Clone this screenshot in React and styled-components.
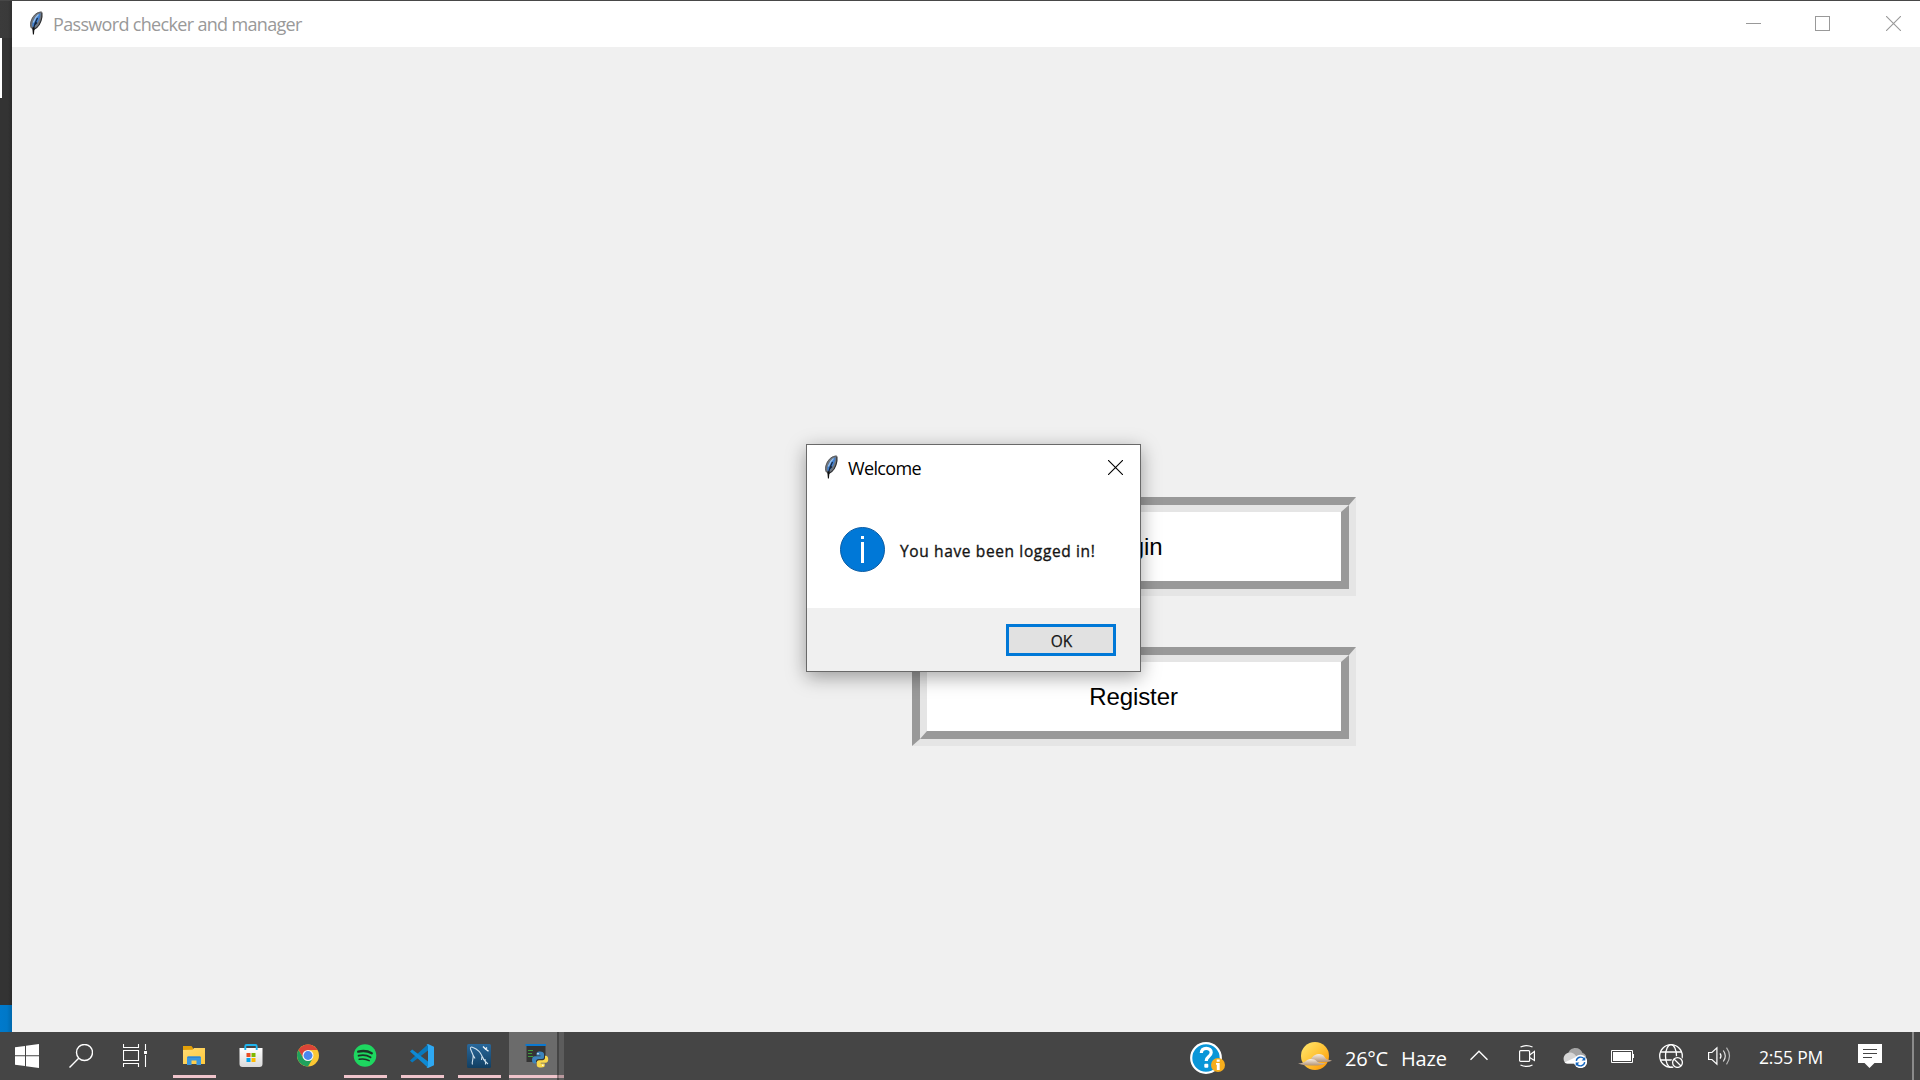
import React from 'react';
import styled, { createGlobalStyle } from 'styled-components';

const GlobalStyle = createGlobalStyle`
  * { box-sizing: border-box; }
  html, body { margin: 0; padding: 0; background: #444; overflow: hidden; }
  svg { display: block; flex: none; }
`;

const ui = `'Open Sans', 'Noto Sans', sans-serif`;

const Desktop = styled.div`
  width: 1920px;
  height: 1080px;
  display: flex;
  flex-direction: column;
  background: #444;
  font-family: ${ui};
`;

const Workspace = styled.div`
  height: 1032px;
  display: flex;
  padding-top: 1px;
  background: #474747;
`;

const Behind = styled.div`
  width: 12px;
  display: flex;
  flex-direction: column;
  background: linear-gradient(90deg, #333 0, #333 8px, #2a2a2a 12px);
`;

const BehindTop = styled.div`
  height: 37px;
  background: linear-gradient(90deg, #3b3b3b 0, #3a3a3a 8px, #303030 12px);
`;

const BehindMark = styled.div`
  width: 2px;
  height: 60px;
  background: #fff;
`;

const BehindStatus = styled.div`
  height: 27px;
  margin-top: auto;
  background: linear-gradient(90deg, #007acc 0, #0078c8 7px, #0068ac 12px);
`;

const Window = styled.main`
  flex: 1;
  display: flex;
  flex-direction: column;
  background: #f0f0f0;
`;

const TitleBar = styled.header`
  height: ${(p) => p.$height}px;
  display: flex;
  align-items: flex-start;
  background: #fff;
  padding-left: 17px;
`;

const FeatherBox = styled.div`
  padding-top: 10px;
`;

const Title = styled.div`
  flex: 1;
  margin-left: ${(p) => p.$left}px;
  padding-top: ${(p) => p.$top}px;
  font-size: 18px;
  line-height: 24px;
  font-weight: ${(p) => p.$weight};
  letter-spacing: ${(p) => p.$spacing}px;
  color: ${(p) => p.$color};
  white-space: nowrap;
`;

const Caption = styled.div`
  width: ${(p) => p.$width}px;
  padding-top: 15px;
  display: flex;
  justify-content: center;
`;

const ButtonColumn = styled.div`
  flex: 1;
  display: flex;
  flex-direction: column;
  gap: 51px;
  padding: 450px 0 0 900px;
`;

const Groove = styled.div`
  width: 444px;
  height: 99px;
  display: flex;
  border-style: solid;
  border-width: 8px 7px 7px 8px;
  border-color: #999 #e5e5e5 #e5e5e5 #999;
`;

const GrooveButton = styled.button`
  flex: 1;
  padding: 1px 1px 0 0;
  border-style: solid;
  border-width: 7px 8px 8px 7px;
  border-color: #e5e5e5 #999 #999 #e5e5e5;
  background: #fff;
  color: #000;
  font: 24px/28px 'Liberation Sans', Arial, sans-serif;
  letter-spacing: -0.1px;
`;

const Dialog = styled.div`
  position: absolute;
  left: 806px;
  top: 444px;
  width: 335px;
  height: 228px;
  display: flex;
  flex-direction: column;
  border: 1px solid #696969;
  background: #fff;
  box-shadow: 0 5px 18px rgba(0, 0, 0, 0.36);
`;

const DialogBody = styled.div`
  flex: 1;
  display: flex;
  align-items: flex-start;
  padding: 35px 0 0 33px;
`;

const Message = styled.div`
  margin: 13px 0 0 15px;
  font-size: 15.5px;
  line-height: 22px;
  letter-spacing: 0.63px;
  -webkit-text-stroke: 0.35px #151515;
  color: #151515;
  white-space: nowrap;
`;

const DialogFooter = styled.div`
  height: 63px;
  display: flex;
  justify-content: flex-end;
  padding: 16px 24px 0 0;
  background: #f0f0f0;
`;

const OkButton = styled.button`
  width: 110px;
  height: 32px;
  padding: 1px 0 0 1px;
  border: 3px solid #0078d7;
  background: #e1e1e1;
  color: #151515;
  font: 15.5px/24px ${ui};
  -webkit-text-stroke: 0.25px #151515;
`;

const Taskbar = styled.footer`
  height: 48px;
  display: flex;
  align-items: stretch;
  background: #454545;
`;

const Slot = styled.div`
  width: ${(p) => p.$width}px;
  display: flex;
  align-items: center;
  justify-content: center;
  padding-top: ${(p) => p.$drop || 0}px;
`;

const Spacer = styled.div`
  width: ${(p) => p.$width}px;
`;

const TaskApp = styled.div`
  width: 57px;
  display: flex;
  flex-direction: column;
  align-items: flex-start;
  padding: 12px 0 0 7px;

  svg { margin-left: 9px; }
`;

const Underline = styled.div`
  width: ${(p) => p.$width || 43}px;
  height: 3px;
  margin-top: 7px;
  background: #efc4cb;
`;

const ActiveApp = styled.div`
  width: 48px;
  display: flex;
  flex-direction: column;
  align-items: flex-start;
  padding-top: 12px;
  background: #6b6b6b;

  svg { margin-left: 16px; }
`;

const StackEdge = styled.div`
  width: 7px;
  display: flex;
  align-items: flex-end;
  padding-bottom: 2px;
  background: linear-gradient(90deg, #454545 2px, #5c5c5c 2px);
`;

const StackLine = styled.div`
  width: 7px;
  height: 3px;
  background: linear-gradient(90deg, #92797d 2px, #b9999e 2px);
`;

const Weather = styled.div`
  width: 165px;
  display: flex;
  align-items: flex-start;
  padding: 8px 0 0 8px;
  color: #fff;
  font-size: 20px;
  line-height: 26px;
  white-space: nowrap;
`;

const Temp = styled.span`
  width: 56px;
  margin: 6px 0 0 12px;
  letter-spacing: -0.3px;
`;

const Condition = styled.span`
  margin-top: 6px;
  letter-spacing: -0.2px;
`;

const Clock = styled.div`
  width: 96px;
  padding-top: 13px;
  text-align: center;
  color: #fff;
  font-size: 17.5px;
  line-height: 24px;
  letter-spacing: -0.2px;
  white-space: nowrap;
`;

const ShowDesktop = styled.div`
  width: 8px;
  margin-left: auto;
  border-left: 2px solid #8a8a8a;
`;

const Feather = () => (
  <svg width="14" height="24" viewBox="0 0 14 24">
    <path d="M12.800.8C8.500.8 4.600 3.500 2.500 8.500 1 12 .8 15.600 2.800 18L4.300 19C8.500 17 12 12.500 13 6z" fill="#74787e" />
    <path d="M12.900 1.500V6C12 12 8.500 16.800 4.800 18.500" fill="none" stroke="#2b2d30" strokeWidth="1.200" />
    <path d="M12.500.900C8.500 1.200 4.800 3.700 2.700 8.500 1.400 11.700 1.200 15 2.300 17" fill="none" stroke="#55585c" strokeWidth="1" />
    <path d="M11.500 2.300C8 3.500 5 7 3.600 11.500 2.900 14 3.200 15.500 4.200 16.800 8 13.500 11.300 8 11.500 2.300z" fill="#4180cf" />
    <path d="M9.500 3.500C7 5.500 5.500 8 4.300 11.500" stroke="#9ec4ec" strokeWidth="1.200" fill="none" />
    <path d="M8.500 7C6.800 10 5.300 14 4.400 18M8 11.500l-2 2" stroke="#14243c" strokeWidth="1.200" fill="none" />
    <path d="M3.300 16.500h2.300l-.7 7h-1z" fill="#111" />
  </svg>
);

const Minimize = () => (
  <svg width="15" height="15" viewBox="0 0 15 15"><path d="M0 7.500h15" stroke="#999" /></svg>
);
const Maximize = () => (
  <svg width="15" height="15" viewBox="0 0 15 15"><rect x=".5" y=".5" width="14" height="14" fill="none" stroke="#999" /></svg>
);
const Close = ({ color }) => (
  <svg width="15" height="15" viewBox="0 0 15 15"><path d="M0 0l15 15M15 0L0 15" stroke={color} strokeWidth="1.100" /></svg>
);

const InfoIcon = () => (
  <svg width="45" height="45" viewBox="0 0 45 45">
    <circle cx="22.500" cy="22.500" r="22" fill="#0078d7" stroke="#0a5ca5" strokeWidth="1" />
    <rect x="21" y="9" width="3" height="3" fill="#fff" />
    <rect x="21" y="15" width="3" height="21" fill="#fff" />
  </svg>
);

const StartIcon = () => (
  <svg width="24" height="24" viewBox="0 0 24 24" fill="#fff">
    <path d="M0 3.300L10 2v9.300H0zM11 1.800L24 0v11.300H11zM0 12.300h10V22L0 20.700zM11 12.300h13V24l-13-1.800z" />
  </svg>
);
const SearchIcon = () => (
  <svg width="24" height="24" viewBox="0 0 24 24" fill="none" stroke="#fff" strokeWidth="1.400">
    <circle cx="15.500" cy="8.500" r="8" /><path d="M9.700 14.300L.5 23.500" />
  </svg>
);
const TaskViewIcon = () => (
  <svg width="24" height="24" viewBox="0 0 24 24" fill="none" stroke="#fff" strokeWidth="1.100">
    <path d="M.5 0v3.500h15V0M.5 6.500h15v10H.5zM.5 23v-3.500h15V23M22.500 0v6M22.500 11v12" />
    <rect x="21" y="7" width="3" height="3" fill="#fff" stroke="none" />
  </svg>
);
const FolderIcon = () => (
  <svg width="24" height="24" viewBox="0 0 24 24">
    <defs><linearGradient id="fold" x1="0" y1="0" x2="1" y2="1"><stop offset="0" stopColor="#ffdb73" /><stop offset="1" stopColor="#ffc93c" /></linearGradient></defs>
    <path d="M1 2h8.500l1.500 2v3H1z" fill="#e3a008" />
    <path d="M1 6l9.500-.2L12 4h11v16H1z" fill="url(#fold)" />
    <path d="M5 21v-7.500l1-1h12l1 1V21h-4.500v-4.500h-5V21z" fill="#3a97e0" />
    <path d="M5.500 12.500h13v1.500h-13z" fill="#2f86d0" />
  </svg>
);
const StoreIcon = () => (
  <svg width="24" height="24" viewBox="0 0 24 24">
    <defs><linearGradient id="bag" x1="0" y1="0" x2="0" y2="1"><stop offset="0" stopColor="#fff" /><stop offset="1" stopColor="#d9d9d9" /></linearGradient></defs>
    <path d="M.5 4h23v16a3 3 0 0 1-3 3h-17a3 3 0 0 1-3-3z" fill="url(#bag)" />
    <path d="M6.300 6V2.200a1.200 1.200 0 0 1 1.200-1.200h9a1.200 1.200 0 0 1 1.200 1.200V6" fill="none" stroke="#1fb4ee" strokeWidth="1.900" />
    <path d="M7.500 9h4v4h-4z" fill="#e84e24" /><path d="M12.500 9h4v4h-4z" fill="#80b900" />
    <path d="M7.500 14h4v4h-4z" fill="#00a3ee" /><path d="M12.500 14h4v4h-4z" fill="#ffb900" />
  </svg>
);
const ChromeIcon = () => (
  <svg width="24" height="24" viewBox="0 0 24 24">
    <circle cx="12" cy="11.500" r="11" fill="#fbc733" />
    <path d="M12 6h9.500A11 11 0 0 0 2.500 6l4.800 8.300z" fill="#dc4437" />
    <path d="M2.500 6A11 11 0 0 0 12 22.500l4.800-8.200H7.300z" fill="#1fa15d" />
    <circle cx="12" cy="11.500" r="5.500" fill="#f5f5f5" /><circle cx="12" cy="11.500" r="4.400" fill="#4a87ee" />
  </svg>
);
const SpotifyIcon = () => (
  <svg width="24" height="24" viewBox="0 0 24 24">
    <circle cx="12" cy="11.500" r="11.300" fill="#1ed760" />
    <g fill="none" stroke="#1c3325" strokeLinecap="round">
      <path d="M5.200 7.700c4.500-1.200 9.500-.8 13.600 1.500" strokeWidth="2.300" />
      <path d="M5.600 11.700c4-1 8.300-.6 11.900 1.500" strokeWidth="1.900" />
      <path d="M6.200 15.300c3.400-.8 7-.4 10 1.400" strokeWidth="1.500" />
    </g>
  </svg>
);
const CodeIcon = () => (
  <svg width="24" height="24" viewBox="0 0 24 24">
    <path d="M18 .2L0 16.500l2.200 2L18 6.500z" fill="#0879bd" />
    <path d="M18 23.800L0 7.500l2.200-2L18 17.500z" fill="#0e8ad4" />
    <path d="M18 0l6 2.700v18.600L18 24l-1.500-.7 1.500-1V1.700L16.500.700z" fill="#2ea8f2" />
  </svg>
);
const MySqlIcon = () => (
  <svg width="24" height="24" viewBox="0 0 24 24">
    <defs><linearGradient id="sea" x1="0" y1="0" x2="0" y2="1"><stop offset="0" stopColor="#29689b" /><stop offset="1" stopColor="#123f62" /></linearGradient></defs>
    <rect width="24" height="24" rx="1.500" fill="url(#sea)" />
    <path d="M5.500 20.500C4.300 17.500 7 15 6 11L3.500 5C3 3 4.500 2.600 6 3.500c4 1.500 7.500 4.500 9.500 9.500 1 3 2.500 5 5.500 7M6 11l2 3.500M15 12.500l-.5 3.500M16 15.500l3 .5M18.500 18v2.500" fill="none" stroke="#cfe0ec" strokeWidth="1.100" />
    <path d="M16 2.500l2.500 2.500L20 3.500M18.500 5l3 2.300" fill="none" stroke="#f0f5f8" strokeWidth="1.400" />
  </svg>
);
const PythonIcon = () => (
  <svg width="24" height="24" viewBox="0 0 24 24">
    <rect x="1.500" y="0" width="19" height="18" fill="#343434" />
    <rect x="0.500" y="0" width="20.500" height="2" fill="#0b78cf" />
    <path d="M3 6.500h5M3 9.500h4M3 12.500h5" stroke="#3f9c3d" strokeWidth="1.100" />
    <path d="M15 7.500c-3 0-3.500 1.200-3.500 2.500v1.500h4v.8H10c-2 0-3 1.500-3 3.700s1 3.500 2.500 3.500H11V17.500c0-1.500 1-2.500 2.500-2.500H17c1.500 0 2-1 2-2v-3c0-1.600-1.500-2.500-4-2.500z" fill="#3c84bd" />
    <path d="M16 23.500c3 0 3.700-1 3.700-2.300v-1.700h-4v-.8H20.500c2 0 2.700-1.500 2.700-3.500s-1-3.500-2.500-3.500H20v2c0 1.500-1 2.500-2.500 2.500H14c-1.500 0-2.200 1-2.200 2v3c0 1.600 1.500 2.300 4.200 2.300z" fill="#fbd94c" />
    <circle cx="13" cy="9.700" r=".8" fill="#fff" /><circle cx="17.800" cy="21.300" r=".8" fill="#fff" />
  </svg>
);
const HelpIcon = () => (
  <svg width="36" height="32" viewBox="0 0 36 32">
    <circle cx="16" cy="16" r="14.800" fill="#0a96d8" stroke="#fff" strokeWidth="2.200" />
    <path d="M11.300 11c.2-3.200 2.200-4.600 5-4.600 3 0 4.900 1.700 4.900 4.100 0 2.200-1.300 3.200-2.700 4.300-1.500 1.200-2.300 2-2.300 4.200" fill="none" stroke="#fff" strokeWidth="3.200" />
    <rect x="14.300" y="21.800" width="4" height="4" rx="1" fill="#fff" />
    <circle cx="28" cy="23" r="7" fill="#f6ad1c" />
    <path d="M26.700 17.500h3v2.200h-3zM26 21h3.700v7h-2.900v-5.300H26z" fill="#fff" />
  </svg>
);
const WeatherIcon = () => (
  <svg width="35" height="32" viewBox="0 0 35 32">
    <defs>
      <linearGradient id="sun" x1="0" y1="0" x2="1" y2="1"><stop offset="0" stopColor="#ffe873" /><stop offset=".5" stopColor="#ffc436" /><stop offset="1" stopColor="#ff9100" /></linearGradient>
      <linearGradient id="haze" x1="0" y1="0" x2="0" y2="1"><stop offset="0" stopColor="#f7ece0" /><stop offset="1" stopColor="#b39374" /></linearGradient>
    </defs>
    <circle cx="17" cy="16" r="14" fill="url(#sun)" />
    <path d="M9 20.500c3-.2 3.500-1 5-3 3-4 10-5 13 0 1 1.700 3 2.600 7 3-2 1.300-4 1.500-7 1.500H17z" fill="url(#haze)" />
    <path d="M0 23.500c4-.3 6-.7 8-2.500 3-2.700 8-2.500 11 .5 1.500 1.500 4 1.500 9 1.700-3 1.700-6 2.300-12 2.300-7 0-12-.3-16-2z" fill="url(#haze)" />
  </svg>
);
const ChevronIcon = () => (
  <svg width="18" height="24" viewBox="0 0 18 24" fill="none" stroke="#fff" strokeWidth="1.400"><path d="M.5 15.700L9 7.200l8.500 8.500" /></svg>
);
const CameraIcon = () => (
  <svg width="16" height="24" viewBox="0 0 16 24" fill="none" stroke="#fff" strokeWidth="1.200">
    <rect x=".6" y="6.600" width="10" height="10.800" rx="1" /><path d="M10.600 11l4.800-3.500v9L10.600 13.500M1.500 3c3.500-1.700 8.500-1.700 12 0M1.500 21c3.500 1.700 8.500 1.700 12 0" />
  </svg>
);
const CloudIcon = () => (
  <svg width="24" height="24" viewBox="0 0 24 24">
    <path d="M5 10c1-4 4-6 7.500-6s6 2 7 5c2 .5 3.500 2 3.500 4v3H8z" fill="#a5a5a5" />
    <path d="M4.500 19.500C-.5 19.500-1 11 4.500 9 8 7.500 11 9 13 12l3 7.500z" fill="#d6d6d6" />
    <path d="M1.500 18.500L12 13.500l5 6H4.500a4 4 0 0 1-3-1z" fill="#fff" />
    <circle cx="17.500" cy="17.500" r="6.700" fill="#fff" />
    <path d="M13.300 16.800a4.400 4.400 0 0 1 7.800-2M21.700 18.200a4.400 4.400 0 0 1-7.800 2" fill="none" stroke="#1467c0" strokeWidth="1.400" />
    <path d="M22.300 12.800v3.700h-3.700zM12.700 22.200v-3.700h3.700z" fill="#1467c0" />
  </svg>
);
const BatteryIcon = () => (
  <svg width="23" height="24" viewBox="0 0 23 24">
    <path d="M.5 6.500h21v12H.5zM22.500 10v4" fill="none" stroke="#fff" /><rect x="2" y="8" width="18" height="9" fill="#fff" />
  </svg>
);
const GlobeIcon = () => (
  <svg width="24" height="24" viewBox="0 0 24 24" fill="none" stroke="#fff" strokeWidth="1.300">
    <circle cx="12" cy="12" r="11.300" /><ellipse cx="12" cy="12" rx="5.500" ry="11.300" /><path d="M1.500 8h21M1.500 16h21" />
    <circle cx="18.500" cy="18.500" r="6.500" fill="#454545" stroke="none" /><circle cx="18.500" cy="18.500" r="4.900" /><path d="M15 15l7 7" />
  </svg>
);
const SpeakerIcon = () => (
  <svg width="23" height="24" viewBox="0 0 23 24" fill="none" stroke="#fff" strokeWidth="1.200">
    <path d="M.6 8.500h3.300L8.900 3.800v16.400L3.900 15.500H.6z" /><path d="M12 9.300q2 2.700 0 5.400" /><path d="M15.300 6.500q4 5.500 0 11" stroke="#e2e2e2" /><path d="M18.500 3.700q6 8.300 0 16.600" stroke="#b5b5b5" />
  </svg>
);
const NotesIcon = () => (
  <svg width="24" height="24" viewBox="0 0 24 24">
    <path d="M0 0h24v19h-7.500L11.500 24l-5-5H0z" fill="#fff" /><path d="M5 5.500h14M5 9.500h14M5 13.500h9" stroke="#454545" />
  </svg>
);

export default function App() {
  return (
    <Desktop>
      <GlobalStyle />
      <Workspace>
        <Behind>
          <BehindTop />
          <BehindMark />
          <BehindStatus />
        </Behind>
        <Window>
          <TitleBar $height={46}>
            <FeatherBox><Feather /></FeatherBox>
            <Title $left={10} $top={11} $weight={400} $spacing={-0.67} $color="#999">Password checker and manager</Title>
            <Caption $width={49}><Minimize /></Caption>
            <Caption $width={89}><Maximize /></Caption>
            <Caption $width={53}><Close color="#999" /></Caption>
          </TitleBar>
          <ButtonColumn>
            <Groove><GrooveButton>Login</GrooveButton></Groove>
            <Groove><GrooveButton>Register</GrooveButton></Groove>
          </ButtonColumn>
        </Window>
      </Workspace>

      <Taskbar>
        <Slot $width={54}><StartIcon /></Slot>
        <Slot $width={54}><SearchIcon /></Slot>
        <Slot $width={54}><TaskViewIcon /></Slot>
        <Spacer $width={4} />
        <TaskApp><FolderIcon /><Underline /></TaskApp>
        <TaskApp><StoreIcon /></TaskApp>
        <TaskApp><ChromeIcon /></TaskApp>
        <TaskApp><SpotifyIcon /><Underline /></TaskApp>
        <TaskApp><CodeIcon /><Underline /></TaskApp>
        <TaskApp><MySqlIcon /><Underline /></TaskApp>
        <Spacer $width={1} />
        <ActiveApp><PythonIcon /><Underline $width={48} /></ActiveApp>
        <StackEdge><StackLine /></StackEdge>
        <Spacer $width={620} />
        <Slot $width={48} $drop={4}><HelpIcon /></Slot>
        <Spacer $width={58} />
        <Weather><WeatherIcon /><Temp>26°C</Temp><Condition>Haze</Condition></Weather>
        <Slot $width={48}><ChevronIcon /></Slot>
        <Slot $width={48}><CameraIcon /></Slot>
        <Slot $width={47}><CloudIcon /></Slot>
        <Slot $width={49}><BatteryIcon /></Slot>
        <Slot $width={48}><GlobeIcon /></Slot>
        <Slot $width={48}><SpeakerIcon /></Slot>
        <Clock>2:55 PM</Clock>
        <Slot $width={62}><NotesIcon /></Slot>
        <ShowDesktop />
      </Taskbar>

      <Dialog role="dialog">
        <TitleBar $height={47}>
          <FeatherBox><Feather /></FeatherBox>
          <Title $left={10} $top={11} $weight={400} $spacing={-0.65} $color="#000">Welcome</Title>
          <Caption $width={49}><Close color="#000" /></Caption>
        </TitleBar>
        <DialogBody>
          <InfoIcon />
          <Message>You have been logged in!</Message>
        </DialogBody>
        <DialogFooter><OkButton>OK</OkButton></DialogFooter>
      </Dialog>
    </Desktop>
  );
}
